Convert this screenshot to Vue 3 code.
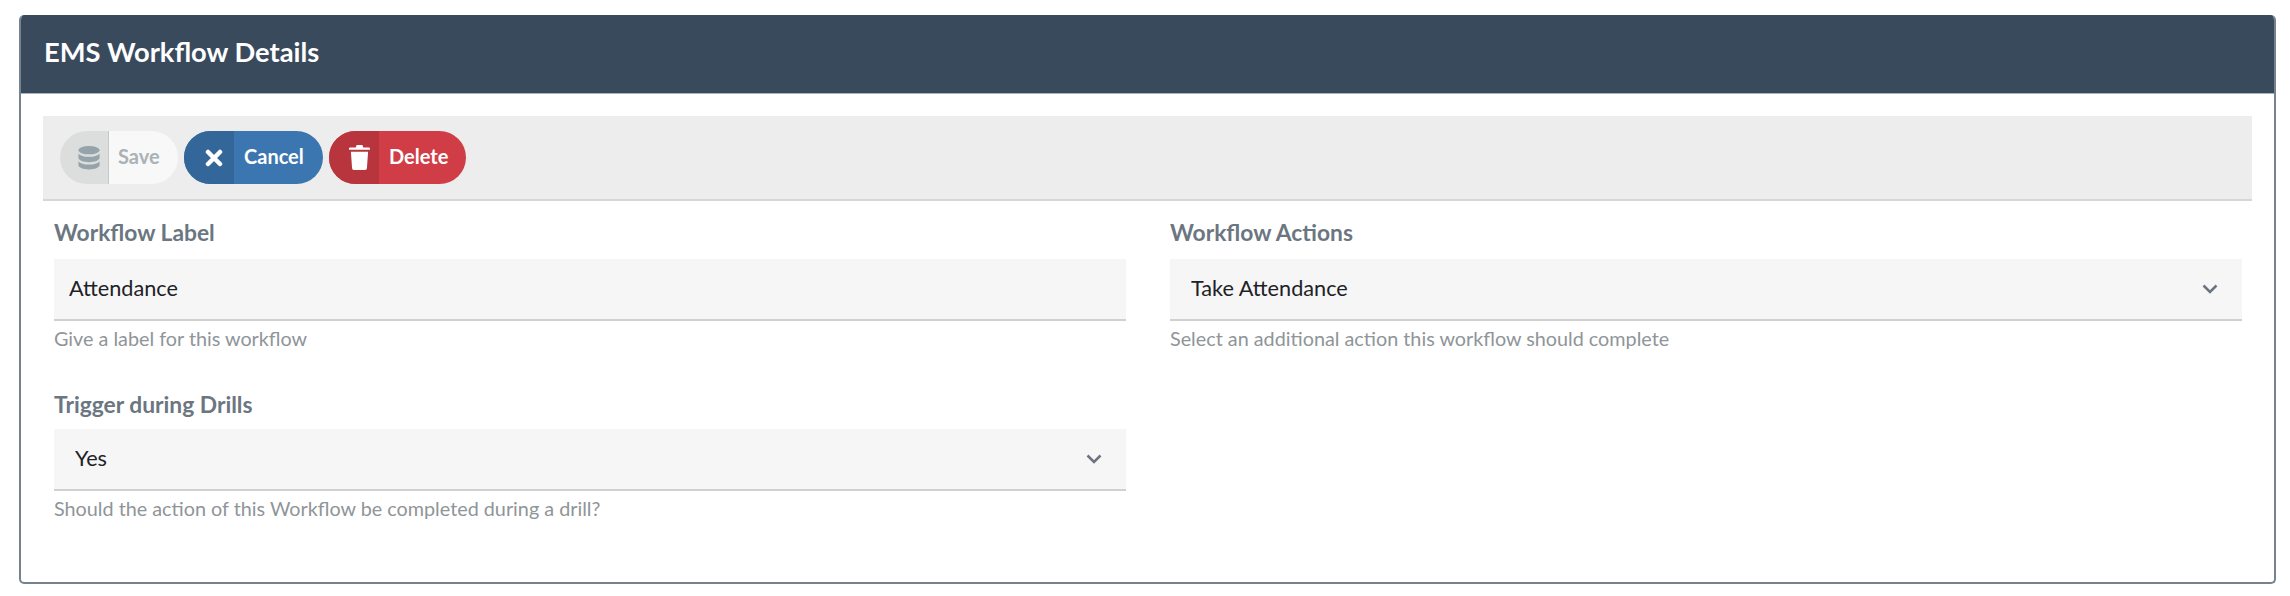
<script setup>
const fields = [
  { label: 'Workflow Label', type: 'input', value: 'Attendance', help: 'Give a label for this workflow' },
  { label: 'Workflow Actions', type: 'select', value: 'Take Attendance', help: 'Select an additional action this workflow should complete' },
  { label: 'Trigger during Drills', type: 'select', value: 'Yes', help: 'Should the action of this Workflow be completed during a drill?' }
]
</script>

<template>
  <div class="panel">
    <header class="head">EMS Workflow Details</header>
    <div class="body">
      <div class="toolbar">
        <button class="btn save" type="button">
          <span class="ico">
            <svg width="22" height="24" viewBox="0 0 24 26"><g fill="#95a3aa"><ellipse cx="12" cy="4.500" rx="11.500" ry="4.500"/><path d="M.5 8c1.500 2.500 6.500 3.700 11.500 3.700S22 10.500 23.500 8v5c0 2.500-5.500 4.500-11.500 4.500S.5 15.500.5 13z"/><path d="M.5 16.500c1.500 2.500 6.500 3.700 11.500 3.700s10-1.200 11.500-3.700V21c0 2.500-5.500 4.500-11.500 4.500S.5 23.500.5 21z"/></g></svg>
          </span>
          <span class="txt">Save</span>
        </button>
        <button class="btn cancel" type="button">
          <span class="ico">
            <svg width="18" height="18" viewBox="0 0 18 18"><path d="M3 3l12 12M15 3L3 15" stroke="#fff" stroke-width="4.500" stroke-linecap="round"/></svg>
          </span>
          <span class="txt">Cancel</span>
        </button>
        <button class="btn del" type="button">
          <span class="ico">
            <svg width="21" height="25" viewBox="0 0 22 26"><path fill="#fff" d="M8 0h6l1 2.500h6a1 1 0 0 1 1 1V5H0V3.500a1 1 0 0 1 1-1h6zM2 7h18l-1.200 17a2 2 0 0 1-2 2H5.200a2 2 0 0 1-2-2z"/></svg>
          </span>
          <span class="txt">Delete</span>
        </button>
      </div>
      <div class="form">
        <div v-for="f in fields" :key="f.label" class="field">
          <label class="label">{{ f.label }}</label>
          <div v-if="f.type === 'input'" class="control">
            <input class="in" :value="f.value" />
          </div>
          <div v-else class="control">
            <select class="in sel">
              <option>{{ f.value }}</option>
            </select>
            <svg class="chev" width="16" height="10" viewBox="0 0 16 10"><path d="M1.500 1.500L8 8l6.500-6.500" fill="none" stroke="#6b7480" stroke-width="2.500"/></svg>
          </div>
          <div class="help">{{ f.help }}</div>
        </div>
      </div>
    </div>
  </div>
</template>

<style>
html, body { margin: 0; background: #fff; }
</style>

<style scoped>
.panel {
  box-sizing: border-box;
  margin: 15px 14px 0 19px;
  height: 569px;
  border: 2px solid #76838f;
  border-top: 0;
  border-radius: 5px;
  font-family: Lato, "Open Sans", sans-serif;
  overflow: hidden;
}
.head {
  box-sizing: border-box;
  height: 79px;
  margin: 0 -2px;
  padding: 0 0 5px 25px;
  display: flex;
  align-items: center;
  background: #3a4a5d;
  border-bottom: 1px solid #a9b3bd;
  color: #fff;
  font-size: 27.3px;
  font-weight: 700;
}
.body { padding: 22px 22px 0 22px; }
.toolbar {
  box-sizing: border-box;
  height: 85px;
  padding: 15px 0 0 17px;
  display: flex;
  gap: 6px;
  background: #ededed;
  border-bottom: 2px solid #d6d6d6;
}
.btn {
  display: flex;
  align-items: stretch;
  height: 53px;
  padding: 0;
  border: 0;
  border-radius: 27px;
  overflow: hidden;
  font-family: inherit;
  font-size: 20px;
  font-weight: 700;
  color: #fff;
}
.ico { flex: none; box-sizing: border-box; display: flex; align-items: center; justify-content: center; padding-left: 9px; }
.txt { display: flex; align-items: center; padding: 0 0 3px 10px; }
.save { background: #f8f8f8; color: #aab2b7; width: 118px; }
.save .ico { width: 49px; background: #dcdddd; border-right: 1px solid #c5c8c8; }
.save .txt { padding-left: 9px; }
.cancel { background: #3b76b0; width: 139px; }
.cancel .ico { width: 50px; background: #33679a; }
.del { background: #d13d47; width: 137px; }
.del .ico { width: 50px; background: #b9353d; padding-left: 10px; }
.form {
  display: grid;
  grid-template-columns: 1072px 1072px;
  column-gap: 44px;
  padding: 18px 0 0 11px;
}
.field { height: 170px; }
.label {
  display: block;
  height: 40px;
  line-height: 26px;
  font-size: 22.8px;
  font-weight: 700;
  color: #6b7681;
}
.field:nth-child(3) .label { height: 38px; margin-top: 2px; }
.control { position: relative; }
.in {
  display: block;
  box-sizing: border-box;
  width: 100%;
  height: 62px;
  padding: 0 15px 2px;
  background: #f6f6f6;
  border: 0;
  border-bottom: 2px solid #d0d0d0;
  border-radius: 0;
  outline: 0;
  font-family: inherit;
  font-size: 21.7px;
  color: #1e2226;
  appearance: none;
}
.sel { padding-left: 21px; }
.chev { position: absolute; right: 24px; top: 25px; pointer-events: none; }
.help {
  margin-top: 4px;
  line-height: 26px;
  font-size: 19.8px;
  color: #8f9598;
}
</style>
